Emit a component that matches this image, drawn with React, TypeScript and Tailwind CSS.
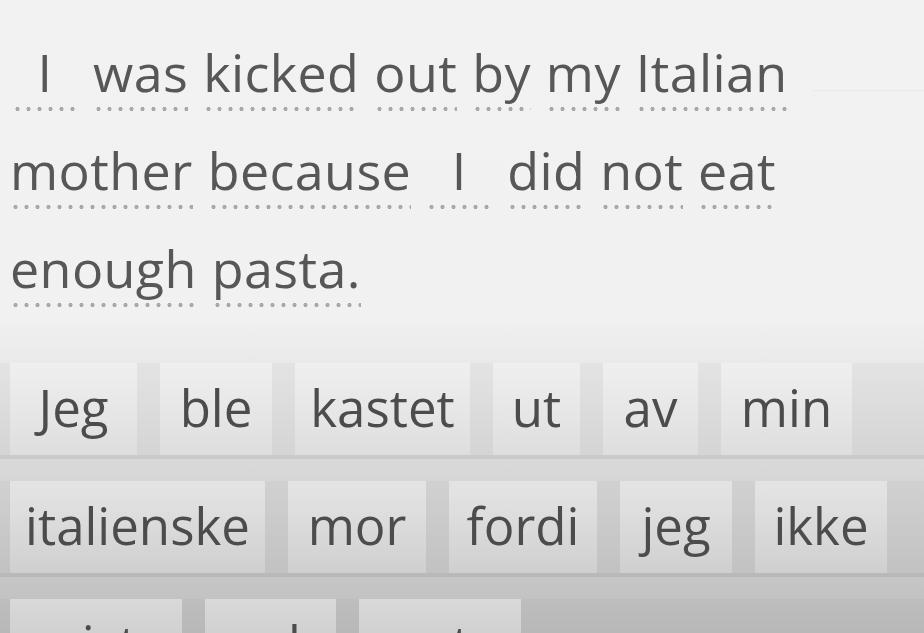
const lines: { text: string; wide?: boolean }[][] = [
  [
    { text: "I", wide: true },
    { text: "was" },
    { text: "kicked" },
    { text: "out" },
    { text: "by" },
    { text: "my" },
    { text: "Italian" },
  ],
  [
    { text: "mother" },
    { text: "because" },
    { text: "I", wide: true },
    { text: "did" },
    { text: "not" },
    { text: "eat" },
  ],
  [{ text: "enough" }, { text: "pasta." }],
];

// word bank tiles, widths read off the screenshot
const bank: { w: string; width: number }[][] = [
  [
    { w: "Jeg", width: 127 },
    { w: "ble", width: 112 },
    { w: "kastet", width: 175 },
    { w: "ut", width: 87 },
    { w: "av", width: 95 },
    { w: "min", width: 131 },
  ],
  [
    { w: "italienske", width: 255 },
    { w: "mor", width: 138 },
    { w: "fordi", width: 148 },
    { w: "jeg", width: 112 },
    { w: "ikke", width: 132 },
  ],
  [
    { w: "spiste", width: 172 },
    { w: "nok", width: 131 },
    { w: "pasta.", width: 162 },
  ],
];

function Token({ text, wide }: { text: string; wide?: boolean }) {
  return (
    <div className={`flex flex-col ${wide ? "w-[66px] items-center" : ""}`}>
      <span className="h-[60px] leading-[60px] whitespace-nowrap">{text}</span>
      <span className="mt-[5px] h-[4px] w-full bg-[radial-gradient(circle,#a9a9a9_1.8px,transparent_2.3px)] bg-[length:11px_4px] bg-repeat-x" />
    </div>
  );
}

export default function App() {
  return (
    <div className="h-[633px] w-[924px] overflow-hidden bg-[linear-gradient(to_bottom,#f2f2f2_0%,#f1f1f1_50%,#bdbdbd_100%)] font-['Open_Sans',sans-serif] text-[#575757]">
      <div className="flex h-[340px] flex-col gap-[29px] pt-[42px] text-[52px] tracking-[0.4px]">
        {lines.map((line, i) => (
          <div key={i} className={`flex gap-[15px] ${i === 0 ? "pl-[12px]" : "pl-[10px]"}`}>
            {line.map((t, j) => (
              <Token key={j} text={t.text} wide={t.wide} />
            ))}
            {i === 0 && <div className="ml-[10px] mt-[48px] h-px flex-1 bg-[#e9e9e9]" />}
          </div>
        ))}
      </div>

      <div className="flex flex-col gap-[22px] pt-[23px] text-[51px]">
        {bank.map((row, i) => (
          <div
            key={i}
            className="flex h-[96px] gap-[23px] border-b-4 border-black/[0.045] bg-black/[0.025] pl-[10px]"
          >
            {row.map((t) => (
              <div
                key={t.w}
                style={{ width: t.width }}
                className="h-[92px] shrink-0 bg-[linear-gradient(to_bottom,rgba(255,255,255,0.42),rgba(255,255,255,0.22))] text-center leading-[88px] text-[#4c4c4c]"
              >
                {t.w}
              </div>
            ))}
          </div>
        ))}
      </div>
    </div>
  );
}
